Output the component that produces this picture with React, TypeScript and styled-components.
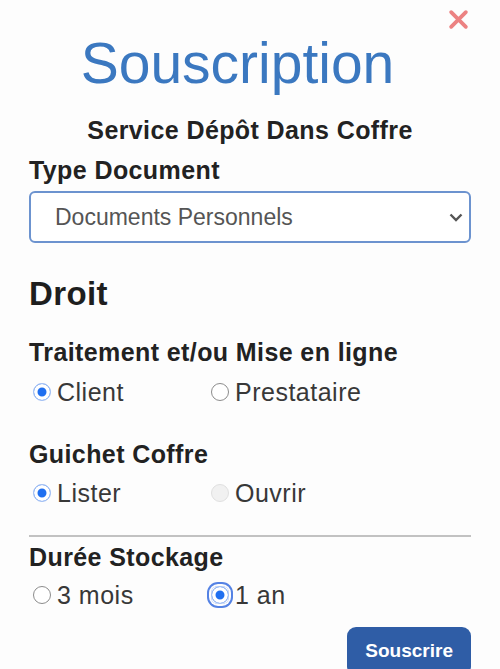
import styled, { createGlobalStyle } from "styled-components";

const GlobalStyle = createGlobalStyle`
  html, body {
    margin: 0;
    padding: 0;
    overflow: hidden;
    background: #fdfdfd;
    font-family: "Liberation Sans", Arial, sans-serif;
  }
`;

const Page = styled.form`
  display: flex;
  flex-direction: column;
  padding: 0 29px;
`;

const Header = styled.header`
  display: flex;
  align-items: flex-start;
`;

const Title = styled.h1`
  flex: 1;
  margin: 29px 0 0;
  text-align: center;
  font-size: 57px;
  line-height: 1.2;
  font-weight: 400;
  color: #3b78c0;
`;

const CloseButton = styled.button`
  display: flex;
  justify-content: center;
  width: 25px;
  margin-top: 9px;
  padding: 0;
  border: none;
  background: none;
  cursor: pointer;
`;

const Subtitle = styled.h2`
  margin: 18px 0 0;
  text-align: center;
  font-size: 25px;
  line-height: 1.2;
  font-weight: 700;
  letter-spacing: 0.4px;
  color: #222;
`;

const FieldLabel = styled.div<{ $mt: number }>`
  margin-top: ${({ $mt }) => $mt}px;
  font-size: 25px;
  line-height: 1.2;
  font-weight: 700;
  letter-spacing: 0.4px;
  color: #222;
`;

const SectionTitle = styled.h3`
  margin: 31px 0 0;
  font-size: 33px;
  line-height: 1.2;
  font-weight: 700;
  letter-spacing: 0.4px;
  color: #1e1e1e;
`;

const SelectWrap = styled.div`
  position: relative;
  margin-top: 6px;
`;

const Select = styled.select`
  appearance: none;
  display: block;
  width: 100%;
  height: 52px;
  padding: 0 40px 0 24px;
  border: 2px solid #6c93cf;
  border-radius: 6px;
  background: #fff;
  font-family: "Liberation Sans", Arial, sans-serif;
  font-size: 23px;
  color: #555;
  outline: none;
`;

const Chevron = styled.svg`
  position: absolute;
  right: 8px;
  top: 22px;
  pointer-events: none;
`;

const RadioRow = styled.div<{ $mt: number }>`
  display: flex;
  margin-top: ${({ $mt }) => $mt}px;
`;

const RadioOption = styled.label`
  display: flex;
  align-items: center;
  width: 178px;
  font-size: 25px;
  line-height: 1.2;
  letter-spacing: 0.5px;
  color: #383838;
`;

const RadioBox = styled.span<{ $focused?: boolean }>`
  display: flex;
  margin: 0 6px 0 4px;
  border-radius: 7px;
  box-shadow: ${({ $focused }) =>
    $focused ? "0 0 0 2px #fdfdfd, 0 0 0 4px #5482e4" : "none"};
`;

const Radio = styled.input`
  appearance: none;
  width: 18px;
  height: 18px;
  margin: 0;
  border: 1.5px solid #8c8c8c;
  border-radius: 50%;
  background: #fff;

  &:checked {
    border-color: #a8c3f4;
    background: #1f6ff0;
    box-shadow: inset 0 0 0 3.5px #fff;
  }

  &:disabled {
    border-color: #e0e0e0;
    background: #f1f1f1;
  }
`;

const Divider = styled.div`
  margin-top: 27px;
  height: 2px;
  background: #c2c2c2;
`;

const Footer = styled.div`
  display: flex;
  justify-content: flex-end;
  margin-top: 17px;
`;

const SubmitButton = styled.button`
  height: 49px;
  padding: 0 18px;
  border: none;
  border-radius: 9px;
  background: #2f5da6;
  color: #fff;
  font-family: "Liberation Sans", Arial, sans-serif;
  font-size: 19px;
  font-weight: 700;
  cursor: pointer;
`;

type Choice = { label: string; checked?: boolean; disabled?: boolean; focused?: boolean };

const RadioGroup = ({ name, mt, choices }: { name: string; mt: number; choices: Choice[] }) => (
  <RadioRow $mt={mt}>
    {choices.map((c) => (
      <RadioOption key={c.label}>
        <RadioBox $focused={c.focused}>
          <Radio type="radio" name={name} defaultChecked={c.checked} disabled={c.disabled} />
        </RadioBox>
        {c.label}
      </RadioOption>
    ))}
  </RadioRow>
);

export default function App() {
  return (
    <>
      <GlobalStyle />
      <Page onSubmit={(e) => e.preventDefault()}>
        <Header>
          <Title>Souscription</Title>
          <CloseButton type="button" aria-label="Fermer">
            <svg width="21" height="21" viewBox="0 0 20 20">
              <path
                d="M3 3 L17 17 M17 3 L3 17"
                stroke="#ec8282"
                strokeWidth="3.6"
                strokeLinecap="round"
              />
            </svg>
          </CloseButton>
        </Header>
        <Subtitle>Service Dépôt Dans Coffre</Subtitle>

        <FieldLabel $mt={10}>Type Document</FieldLabel>
        <SelectWrap>
          <Select defaultValue="perso">
            <option value="perso">Documents Personnels</option>
            <option value="pro">Documents Professionnels</option>
          </Select>
          <Chevron width="14" height="9" viewBox="0 0 14 9">
            <path d="M1.5 1.5 L7 7 L12.5 1.5" fill="none" stroke="#555" strokeWidth="2.4" />
          </Chevron>
        </SelectWrap>

        <SectionTitle>Droit</SectionTitle>

        <FieldLabel $mt={23}>Traitement et/ou Mise en ligne</FieldLabel>
        <RadioGroup
          name="traitement"
          mt={10}
          choices={[{ label: "Client", checked: true }, { label: "Prestataire" }]}
        />

        <FieldLabel $mt={32}>Guichet Coffre</FieldLabel>
        <RadioGroup
          name="guichet"
          mt={9}
          choices={[{ label: "Lister", checked: true }, { label: "Ouvrir", disabled: true }]}
        />

        <Divider />

        <FieldLabel $mt={5}>Durée Stockage</FieldLabel>
        <RadioGroup
          name="duree"
          mt={8}
          choices={[{ label: "3 mois" }, { label: "1 an", checked: true, focused: true }]}
        />

        <Footer>
          <SubmitButton type="submit">Souscrire</SubmitButton>
        </Footer>
      </Page>
    </>
  );
}
